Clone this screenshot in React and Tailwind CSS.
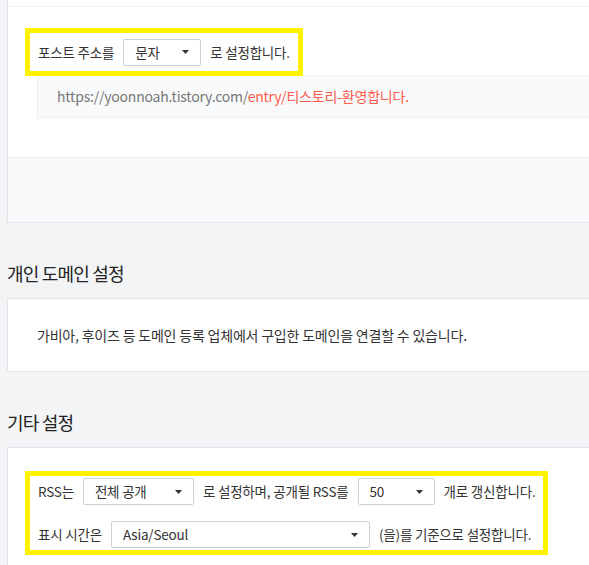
import React from 'react';

const FONT = { fontFamily: '"Noto Sans CJK KR", "Noto Sans", sans-serif' };

// fake select box, closed state
const Select = ({ value, width }) => (
    <div className={`flex items-center justify-between h-[27px] pl-[11px] pr-[11px] bg-white border border-[#ccd0d7] rounded-[2px] ${width}`}>
        <span>{value}</span>
        <svg width="7" height="4" viewBox="0 0 7 4"><path d="M0 0h7L3.5 4z" fill="#333" /></svg>
    </div>
);

const Highlight = ({ className, children }) => (
    <div className={`inline-flex border-[5px] border-[#fff200] bg-white text-[13.5px] ${className}`}>{children}</div>
);

const App = () => {
    return (
        <div className="w-[589px] h-[565px] overflow-hidden bg-[#f3f4f6] text-[#333] text-[14px] tracking-[-0.2px]" style={FONT}>
            <div className="ml-[7px] w-[660px]">
                {/* post url card (top cut off) */}
                <div className="bg-white border-x border-b border-[#e1e4e9]">
                    <div className="h-[7px] border-b border-[#eef0f3]" />
                    <div className="pt-[21px]">
                        <Highlight className="ml-[17px] relative z-10">
                            <div className="flex items-center h-[38px] px-2 gap-[9px]">
                                <span>포스트 주소를</span>
                                <Select value="문자" width="w-[78px]" />
                                <span>로 설정합니다.</span>
                            </div>
                        </Highlight>
                        <div className="ml-[29px] -mt-px h-[43px] flex items-center pl-[19px] bg-[#f9fafb] border border-[#eef0f3] text-[#777]">
                            <span>https://yoonnoah.tistory.com/<span className="text-[#ff5a4a]">entry/티스토리-환영합니다.</span></span>
                        </div>
                        <div className="h-[39px]" />
                    </div>
                    <div className="h-[65px] bg-[#f9fafb] border-t border-[#eef0f3]" />
                </div>

                <h2 className="mt-[36px] h-[28px] leading-[28px] text-[18px] tracking-[-0.8px] text-[#222]">개인 도메인 설정</h2>
                <div className="mt-[11px] h-[74px] flex items-center bg-white border border-[#e1e4e9] pl-[29px] pt-px">
                    가비아, 후이즈 등 도메인 등록 업체에서 구입한 도메인을 연결할 수 있습니다.
                </div>

                <h2 className="mt-[36px] h-[28px] leading-[28px] text-[18px] tracking-[-0.8px] text-[#222]">기타 설정</h2>
                <div className="mt-[11px] bg-white border border-[#e1e4e9] pt-[23px] h-[200px]">
                    <Highlight className="ml-[17px] flex-col py-[2px] px-2 gap-4">
                        <div className="flex items-center gap-[9px]">
                            <span>RSS는</span>
                            <Select value="전체 공개" width="w-[111px]" />
                            <span>로 설정하며, 공개될 RSS를</span>
                            <Select value="50" width="w-[77px]" />
                            <span>개로 갱신합니다.</span>
                        </div>
                        <div className="flex items-center gap-[9px]">
                            <span>표시 시간은</span>
                            <Select value="Asia/Seoul" width="w-[259px]" />
                            <span>(을)를 기준으로 설정합니다.</span>
                        </div>
                    </Highlight>
                </div>
            </div>
        </div>
    );
};

export default App;
